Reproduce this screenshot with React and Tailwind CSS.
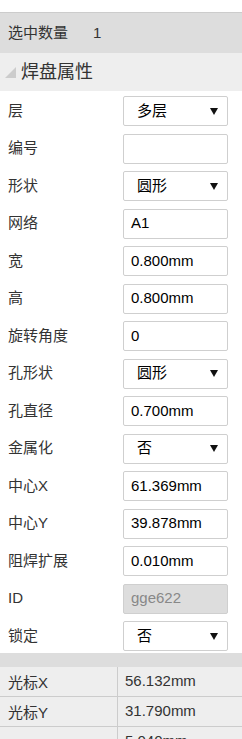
const font = { fontFamily: '"Liberation Sans", "Noto Sans CJK SC", sans-serif' };

const fields = [
    { label: "层", type: "select", value: "多层" },
    { label: "编号", type: "input", value: "" },
    { label: "形状", type: "select", value: "圆形" },
    { label: "网络", type: "input", value: "A1" },
    { label: "宽", type: "input", value: "0.800mm" },
    { label: "高", type: "input", value: "0.800mm" },
    { label: "旋转角度", type: "input", value: "0" },
    { label: "孔形状", type: "select", value: "圆形" },
    { label: "孔直径", type: "input", value: "0.700mm" },
    { label: "金属化", type: "select", value: "否" },
    { label: "中心X", type: "input", value: "61.369mm" },
    { label: "中心Y", type: "input", value: "39.878mm" },
    { label: "阻焊扩展", type: "input", value: "0.010mm" },
    { label: "ID", type: "disabled", value: "gge622" },
    { label: "锁定", type: "select", value: "否" },
];

const cursorRows = [
    { label: "光标X", value: "56.132mm" },
    { label: "光标Y", value: "31.790mm" },
    { label: "", value: "5.040mm" },
];

const Field = ({ item }) => {
    if (item.type === "select") {
        return (
            <div className="flex h-[30px] w-[105px] items-center justify-between rounded-[2px] border border-[#cfcfcf] bg-white pl-[13px] pr-[9px]">
                <span className="text-[15px] text-black">{item.value}</span>
                <svg width="8" height="7" viewBox="0 0 8 7">
                    <polygon points="0,0 8,0 4,7" fill="#111" />
                </svg>
            </div>
        );
    }
    const disabled = item.type === "disabled";
    return (
        <div
            className={`flex h-[30px] w-[105px] items-center rounded-[2px] border border-[#cfcfcf] px-[7px] text-[15px] ${
                disabled ? "bg-[#dddddd] text-[#888]" : "bg-white text-black"
            }`}
        >
            {item.value}
        </div>
    );
};

export default function App() {
    return (
        <div className="h-[739px] w-[242px] overflow-hidden bg-white text-[#333]" style={font}>
            <div className="h-[13px] border-b border-[#cccccc]" />
            <div className="flex h-[40px] items-center bg-[#dddddd] pl-[8px] text-[15px]">
                <span className="w-[85px]">选中数量</span>
                <span>1</span>
            </div>

            <div className="flex h-[38px] items-center gap-[5px] bg-[#eeeeee] pl-[5px]">
                <svg width="11" height="11" viewBox="0 0 11 11">
                    <polygon points="11,0 11,11 0,11" fill="#cccccc" />
                </svg>
                <span className="text-[18px]">焊盘属性</span>
            </div>

            <div className="flex flex-col gap-[7.5px] pb-[2px] pt-[5px]">
                {fields.map((item) => (
                    <div key={item.label} className="flex items-center">
                        <span className="w-[123px] pl-[8px] text-[15px]">{item.label}</span>
                        <Field item={item} />
                    </div>
                ))}
            </div>

            <div className="h-[14px] bg-[#dddddd]" />
            {cursorRows.map((row) => (
                <div key={row.value} className="flex h-[30px] border-b border-[#cccccc] bg-[#eeeeee] text-[15px]">
                    <div className="flex w-[118px] items-center border-r border-[#cccccc] pl-[8px] pt-[3px]">{row.label}</div>
                    <div className="flex items-center pl-[7px]">{row.value}</div>
                </div>
            ))}
        </div>
    );
}
